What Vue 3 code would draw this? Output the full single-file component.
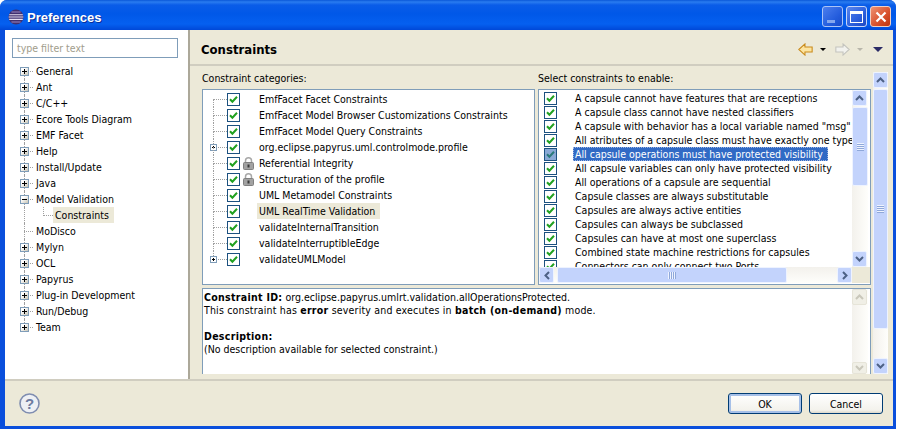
<script setup>
const preferencePages = [
  { label: 'General', twistie: 'plus' },
  { label: 'Ant', twistie: 'plus' },
  { label: 'C/C++', twistie: 'plus' },
  { label: 'Ecore Tools Diagram', twistie: 'plus' },
  { label: 'EMF Facet', twistie: 'plus' },
  { label: 'Help', twistie: 'plus' },
  { label: 'Install/Update', twistie: 'plus' },
  { label: 'Java', twistie: 'plus' },
  { label: 'Model Validation', twistie: 'minus' },
  { label: 'Constraints', child: true },
  { label: 'MoDisco' },
  { label: 'Mylyn', twistie: 'plus' },
  { label: 'OCL', twistie: 'plus' },
  { label: 'Papyrus', twistie: 'plus' },
  { label: 'Plug-in Development', twistie: 'plus' },
  { label: 'Run/Debug', twistie: 'plus' },
  { label: 'Team', twistie: 'plus', last: true }
]

const categories = [
  { label: 'EmfFacet Facet Constraints' },
  { label: 'EmfFacet Model Browser Customizations Constraints' },
  { label: 'EmfFacet Model Query Constraints' },
  { label: 'org.eclipse.papyrus.uml.controlmode.profile', expandable: true },
  { label: 'Referential Integrity', locked: true },
  { label: 'Structuration of the profile', locked: true },
  { label: 'UML Metamodel Constraints' },
  { label: 'UML RealTime Validation', selected: true },
  { label: 'validateInternalTransition' },
  { label: 'validateInterruptibleEdge' },
  { label: 'validateUMLModel', expandable: true, last: true }
]

const constraints = [
  'A capsule cannot have features that are receptions',
  'A capsule class cannot have nested classifiers',
  'A capsule with behavior has a local variable named "msg"',
  'All atributes of a capsule class must have exactly one type',
  'All capsule operations must have protected visibility',
  'All capsule variables can only have protected visibility',
  'All operations of a capsule are sequential',
  'Capsule classes are always substitutable',
  'Capsules are always active entities',
  'Capsules can always be subclassed',
  'Capsules can have at most one superclass',
  'Combined state machine restrictions for capsules',
  'Connectors can only connect two Ports'
]
const selectedConstraintIndex = 4
</script>

<template>
  <div class="window">
    <header class="title-bar">
      <svg class="app-icon" viewBox="0 0 16 16" width="16" height="16">
        <circle cx="8" cy="8" r="7.5" fill="#40306f" />
        <path d="M1.2 5.2h13.6v1.1H1.2zM.7 7.5h14.6v1.1H.7zM1.2 9.8h13.6v1.1H1.2z" fill="#e6dff2" />
        <path d="M3.4 2.6h9.2v.9H3.4zM3.4 12.5h9.2v.9H3.4z" fill="#9a86c4" />
      </svg>
      <span class="title-text">Preferences</span>
      <div class="window-controls">
        <button class="window-button" type="button">
          <span class="minimize-glyph"></span>
        </button>
        <button class="window-button" type="button">
          <span class="maximize-glyph"></span>
        </button>
        <button class="window-button window-button--close" type="button">
          <svg viewBox="0 0 12 12" width="12" height="12">
            <path d="M1.5 1.5l9 9M10.5 1.5l-9 9" stroke="#fff" stroke-width="2.2" fill="none" />
          </svg>
        </button>
      </div>
    </header>

    <div class="window-body">
      <div class="main-area">
        <aside class="sidebar">
          <div class="filter-input">type filter text</div>
          <ul class="page-tree">
            <li
              v-for="page in preferencePages"
              :key="page.label"
              :class="['page-row', { 'page-row--child': page.child, 'page-row--last': page.last }]"
            >
              <span v-if="page.child" class="child-guide"></span>
              <span v-else class="page-guide"></span>
              <span v-if="page.twistie" class="twistie">
                <span class="twistie-h"></span>
                <span v-if="page.twistie === 'plus'" class="twistie-v"></span>
              </span>
              <span :class="['page-label', { 'page-label--selected': page.child }]">{{ page.label }}</span>
            </li>
          </ul>
        </aside>

        <section class="page">
          <div class="page-header">
            <h1 class="page-title">Constraints</h1>
            <div class="nav-tools">
              <svg viewBox="0 0 14 12" width="15" height="13">
                <path d="M.8 6L6.5.8v2.9h6.7v4.6H6.5v2.9z" fill="#fce4a0" stroke="#c98a1a" stroke-width="1" />
              </svg>
              <span class="drop-arrow"></span>
              <svg class="nav-forward" viewBox="0 0 14 12" width="15" height="13">
                <path d="M13.2 6L7.5.8v2.9H.8v4.6h6.7v2.9z" fill="#f2f2ee" stroke="#c4c4be" stroke-width="1" />
              </svg>
              <span class="drop-arrow drop-arrow--disabled"></span>
              <span class="view-menu-arrow"></span>
            </div>
          </div>

          <div class="page-content">
            <div class="panes">
              <div class="upper-panes">
                <div class="pane">
                  <div class="pane-label">Constraint categories:</div>
                  <ul class="category-tree">
                    <li
                      v-for="category in categories"
                      :key="category.label"
                      :class="['category-row', { 'category-row--last': category.last }]"
                    >
                      <span class="category-guide"></span>
                      <span v-if="category.expandable" class="small-twistie"></span>
                      <svg class="check-box" viewBox="0 0 13 13" width="13" height="13">
                        <rect x=".5" y=".5" width="12" height="12" fill="#fff" stroke="#1c5180" />
                        <path d="M3 6.2l2.4 2.5L10 3.8" fill="none" stroke="#21a121" stroke-width="2" />
                      </svg>
                      <svg v-if="category.locked" class="lock-icon" viewBox="0 0 11 13" width="11" height="13">
                        <path d="M2.5 6V3.8a3 3 0 0 1 6 0V6" fill="none" stroke="#a8a8a8" stroke-width="1.5" />
                        <rect x=".5" y="5.5" width="10" height="7" rx="1" fill="#a2a2a2" stroke="#808080" />
                        <rect x="4.5" y="7.5" width="2" height="3" fill="#3a3a3a" />
                      </svg>
                      <span :class="['category-label', { 'category-label--selected': category.selected }]">{{ category.label }}</span>
                    </li>
                  </ul>
                </div>

                <div class="pane">
                  <div class="pane-label">Select constraints to enable:</div>
                  <div class="constraint-box">
                    <div class="constraint-main">
                      <ul class="constraint-list">
                        <li v-for="(constraint, index) in constraints" :key="constraint" class="constraint-row">
                          <svg class="check-box" viewBox="0 0 13 13" width="13" height="13">
                            <rect
                              x=".5"
                              y=".5"
                              width="12"
                              height="12"
                              :fill="index === selectedConstraintIndex ? '#8aa9d6' : '#fff'"
                              stroke="#1c5180"
                            />
                            <path
                              d="M3 6.2l2.4 2.5L10 3.8"
                              fill="none"
                              :stroke="index === selectedConstraintIndex ? '#2a7a7a' : '#21a121'"
                              stroke-width="2"
                            />
                          </svg>
                          <span :class="['constraint-label', { 'constraint-label--selected': index === selectedConstraintIndex }]">{{ constraint }}</span>
                        </li>
                      </ul>
                      <div class="scrollbar scrollbar--vertical">
                        <span class="scroll-button"><svg viewBox="0 0 9 6" width="9" height="6"><path d="M1 5l3.5-3.5L8 5" fill="none" stroke="#4d6185" stroke-width="2" /></svg></span>
                        <span class="scroll-thumb scroll-thumb--list"><span class="grip"></span></span>
                        <span class="scroll-track"></span>
                        <span class="scroll-button"><svg viewBox="0 0 9 6" width="9" height="6"><path d="M1 1l3.5 3.5L8 1" fill="none" stroke="#4d6185" stroke-width="2" /></svg></span>
                      </div>
                    </div>
                    <div class="scrollbar scrollbar--horizontal">
                      <span class="scroll-button"><svg viewBox="0 0 6 9" width="6" height="9"><path d="M5 1L1.5 4.5 5 8" fill="none" stroke="#4d6185" stroke-width="2" /></svg></span>
                      <span class="scroll-thumb scroll-thumb--wide"><span class="grip grip--vertical"></span></span>
                      <span class="scroll-track"></span>
                      <span class="scroll-button"><svg viewBox="0 0 6 9" width="6" height="9"><path d="M1 1l3.5 3.5L1 8" fill="none" stroke="#4d6185" stroke-width="2" /></svg></span>
                      <span class="scroll-corner"></span>
                    </div>
                  </div>
                </div>
              </div>

              <div class="description-box">
                <div class="description-text">
                  <p><b>Constraint ID:</b> org.eclipse.papyrus.umlrt.validation.allOperationsProtected.</p>
                  <p class="severity-line">This constraint has <b>error</b> severity and executes in <b>batch (on-demand)</b> mode.</p>
                  <p class="blank-line"></p>
                  <p><b>Description:</b></p>
                  <p>(No description available for selected constraint.)</p>
                </div>
                <div class="scrollbar scrollbar--vertical scrollbar--disabled">
                  <span class="scroll-button"><svg viewBox="0 0 9 6" width="9" height="6"><path d="M1 5l3.5-3.5L8 5" fill="none" stroke="#c9c7ba" stroke-width="2" /></svg></span>
                  <span class="scroll-track"></span>
                  <span class="scroll-button scroll-button--clipped"><svg viewBox="0 0 9 6" width="9" height="6"><path d="M1 1l3.5 3.5L8 1" fill="none" stroke="#c9c7ba" stroke-width="2" /></svg></span>
                </div>
              </div>
            </div>

            <div class="scrollbar scrollbar--vertical scrollbar--outer">
              <span class="scroll-button"><svg viewBox="0 0 9 6" width="9" height="6"><path d="M1 5l3.5-3.5L8 5" fill="none" stroke="#4d6185" stroke-width="2" /></svg></span>
              <span class="scroll-thumb scroll-thumb--outer"><span class="grip"></span></span>
              <span class="scroll-track"></span>
              <span class="scroll-button"><svg viewBox="0 0 9 6" width="9" height="6"><path d="M1 1l3.5 3.5L8 1" fill="none" stroke="#4d6185" stroke-width="2" /></svg></span>
            </div>
          </div>
        </section>
      </div>

      <footer class="footer">
        <svg class="help-icon" viewBox="0 0 21 21" width="21" height="21">
          <circle cx="10.5" cy="10.5" r="9.5" fill="#eef0f4" stroke="#7f8db0" stroke-width="1.6" />
          <text x="10.5" y="15.5" text-anchor="middle" class="help-mark">?</text>
        </svg>
        <div class="footer-buttons">
          <button class="dialog-button dialog-button--default" type="button">OK</button>
          <button class="dialog-button" type="button">Cancel</button>
        </div>
      </footer>
    </div>
  </div>
</template>

<style scoped>
.window {
  width: 896px;
  height: 429px;
  box-sizing: border-box;
  display: flex;
  flex-direction: column;
  overflow: hidden;
  font-family: "DejaVu Sans Condensed", "DejaVu Sans", sans-serif;
  font-stretch: condensed;
  font-size: 10.5px;
  color: #000;
  background: #0a4fdc;
  border-radius: 7px 7px 0 0;
}
.title-bar {
  height: 30px;
  flex: none;
  display: flex;
  align-items: center;
  padding: 4px 5px 0 8px;
  box-sizing: border-box;
  background: linear-gradient(#0a57d8 0, #2a7cf0 2px, #0a5ce8 5px, #0058e8 14px, #0560f0 24px, #0048d8 30px);
}
.app-icon {
  flex: none;
}
.title-text {
  margin: 1px 0 0 3px;
  font-family: "Liberation Sans", sans-serif;
  font-stretch: normal;
  font-weight: 700;
  font-size: 13px;
  color: #fff;
  text-shadow: 1px 1px 0 #0a2f9c;
}
.window-controls {
  margin: -1px 0 0 auto;
  display: flex;
  gap: 3px;
}
.window-button {
  width: 21px;
  height: 21px;
  padding: 0;
  display: flex;
  align-items: center;
  justify-content: center;
  box-sizing: border-box;
  border: 1px solid #c8d6f8;
  border-radius: 3px;
  background: linear-gradient(135deg, #5a86ee, #2c5fdc 60%, #1c48c4);
}
.window-button:first-child {
  opacity: 0.85;
}
.window-button--close {
  background: linear-gradient(135deg, #ee9272, #d8502c 60%, #bc3410);
  border-color: #f0d0c4;
}
.minimize-glyph {
  width: 8px;
  height: 3px;
  margin-top: 9px;
  margin-right: 3px;
  background: #9db4ee;
}
.maximize-glyph {
  width: 13px;
  height: 12px;
  box-sizing: border-box;
  border: 1px solid #fff;
  border-top-width: 3px;
}
.window-body {
  flex: 1;
  min-height: 0;
  margin: 0 3px 3px 5px;
  display: flex;
  flex-direction: column;
  background: #ece9d8;
}
.main-area {
  height: 349px;
  flex: none;
  display: flex;
}
.sidebar {
  width: 183px;
  flex: none;
  box-sizing: border-box;
  padding: 8px 0 0 7px;
  background: #fff;
}
.filter-input {
  width: 166px;
  height: 20px;
  box-sizing: border-box;
  padding: 3px 0 0 4px;
  border: 1px solid #7f9db9;
  color: #a19d8c;
}
.page-tree {
  list-style: none;
  margin: 5px 0 0;
  padding: 0;
}
.page-row {
  position: relative;
  height: 16px;
  line-height: 16px;
  padding-left: 22px;
}
.page-row--child {
  padding-left: 41px;
}
.page-guide {
  position: absolute;
  left: 12px;
  top: 0;
  width: 9px;
  height: 8px;
  border-bottom: 1px dotted #a0a0a0;
}
.page-row::before {
  content: '';
  position: absolute;
  left: 12px;
  top: 0;
  bottom: 0;
  border-left: 1px dotted #a0a0a0;
}
.page-row:first-child::before {
  top: 8px;
}
.page-row--last::before {
  bottom: 8px;
}
.child-guide {
  position: absolute;
  left: 31px;
  top: 0;
  width: 9px;
  height: 8px;
  border-left: 1px dotted #a0a0a0;
  border-bottom: 1px dotted #a0a0a0;
}
.twistie {
  position: absolute;
  left: 8px;
  top: 4px;
  width: 9px;
  height: 9px;
  box-sizing: border-box;
  border: 1px solid #7f9db9;
  background: linear-gradient(135deg, #fff 30%, #c8c4b4);
}
.twistie-h {
  position: absolute;
  left: 1px;
  top: 3px;
  width: 5px;
  height: 1px;
  background: #000;
}
.twistie-v {
  position: absolute;
  left: 3px;
  top: 1px;
  width: 1px;
  height: 5px;
  background: #000;
}
.page-label {
  display: inline-block;
  padding: 0 2px;
}
.page-label--selected {
  background: #ece9d8;
  padding-right: 5px;
}
.page {
  flex: 1;
  min-width: 0;
  display: flex;
  flex-direction: column;
  border-left: 2px solid #aca899;
}
.page-header {
  height: 36px;
  flex: none;
  box-sizing: border-box;
  display: flex;
  align-items: center;
  padding: 5px 10px 0 11px;
  border-bottom: 2px solid #d0cdc0;
}
.page-title {
  margin: 0;
  font-size: 13px;
  font-weight: 700;
}
.nav-tools {
  margin-left: auto;
  display: flex;
  align-items: center;
}
.drop-arrow {
  width: 0;
  height: 0;
  margin: 0 9px 0 7px;
  border-left: 3px solid transparent;
  border-right: 3px solid transparent;
  border-top: 3px solid #000;
}
.drop-arrow--disabled {
  border-top-color: #b8b6aa;
}
.view-menu-arrow {
  width: 0;
  height: 0;
  margin-left: 1px;
  border-left: 5px solid transparent;
  border-right: 5px solid transparent;
  border-top: 5px solid #2b2b66;
}
.page-content {
  flex: 1;
  min-height: 0;
  display: flex;
  padding: 6px 0 5px 12px;
  gap: 2px;
}
.panes {
  width: 669px;
  flex: none;
  display: flex;
  flex-direction: column;
}
.upper-panes {
  height: 213px;
  flex: none;
  display: flex;
  gap: 3px;
}
.pane {
  width: 333px;
  flex: none;
  display: flex;
  flex-direction: column;
}
.pane-label {
  height: 17px;
  line-height: 12px;
  flex: none;
}
.category-tree {
  flex: 1;
  list-style: none;
  margin: 0;
  padding: 1px 0 0;
  box-sizing: border-box;
  background: #fff;
  border: 1px solid #7f9db9;
}
.category-row {
  position: relative;
  height: 16px;
  line-height: 16px;
  display: flex;
  align-items: center;
  padding-left: 24px;
  white-space: nowrap;
}
.category-guide {
  position: absolute;
  left: 10px;
  top: 0;
  width: 13px;
  height: 8px;
  border-left: 1px dotted #a0a0a0;
  border-bottom: 1px dotted #a0a0a0;
}
.category-row:first-child .category-guide {
  border-left-color: transparent;
}
.category-row::after {
  content: '';
  position: absolute;
  left: 10px;
  top: 8px;
  bottom: 0;
  border-left: 1px dotted #a0a0a0;
}
.category-row--last::after {
  display: none;
}
.small-twistie {
  position: absolute;
  left: 7px;
  top: 5px;
  width: 7px;
  height: 7px;
  box-sizing: border-box;
  background:
    linear-gradient(#000, #000) center / 3px 1px no-repeat,
    linear-gradient(#000, #000) center / 1px 3px no-repeat,
    #fff;
  border: 1px solid #7f9db9;
}
.check-box {
  flex: none;
}
.lock-icon {
  position: absolute;
  left: 40px;
  top: 2px;
}
.category-label {
  margin-left: 17px;
  padding: 0 2px;
}
.category-label--selected {
  background: #ece9d8;
  padding-right: 5px;
}
.constraint-box {
  flex: 1;
  min-height: 0;
  display: flex;
  flex-direction: column;
  box-sizing: border-box;
  background: #fff;
  border: 1px solid #7f9db9;
}
.constraint-main {
  flex: 1;
  min-height: 0;
  display: flex;
}
.constraint-list {
  flex: 1;
  min-width: 0;
  list-style: none;
  margin: 0;
  padding: 1px 0 0 5px;
  overflow: hidden;
}
.constraint-row {
  height: 14px;
  line-height: 14px;
  display: flex;
  align-items: center;
}
.constraint-label {
  margin-left: 16px;
  padding: 0 5px 0 2px;
  white-space: nowrap;
}
.constraint-label--selected {
  background: #316ac5;
  color: #fff;
  outline: 1px dotted #9db4e0;
  outline-offset: -1px;
}
.scrollbar {
  display: flex;
  flex: none;
  background: linear-gradient(90deg, #f3f1ec, #fefefb);
}
.scrollbar--vertical {
  width: 16px;
  flex-direction: column;
  margin-right: 2px;
}
.scrollbar--horizontal {
  height: 16px;
  margin-bottom: 1px;
  background: linear-gradient(#f3f1ec, #fefefb);
}
.scrollbar--outer {
  height: 302px;
  margin-right: 0;
  width: 15px;
}
.scroll-button {
  width: 15px;
  height: 16px;
  flex: none;
  display: flex;
  align-items: center;
  justify-content: center;
  box-sizing: border-box;
  border: 1px solid #eef3ff;
  border-radius: 2px;
  background: #c3d3fc;
}
.scrollbar--disabled .scroll-button {
  background: #f0efe6;
  border-color: #e6e4d8;
}
.scroll-button--clipped {
  height: 12px;
}
.scroll-track {
  flex: 1;
}
.scroll-thumb {
  flex: none;
  box-sizing: border-box;
  display: flex;
  align-items: center;
  justify-content: center;
  border: 1px solid #eef3ff;
  border-radius: 2px;
  background: #c3d3fc;
}
.scroll-thumb--list {
  height: 79px;
  margin-top: 1px;
}
.scroll-thumb--outer {
  height: 240px;
  margin-top: 1px;
}
.scroll-thumb--wide {
  width: 230px;
  margin-left: 3px;
}
.grip {
  width: 7px;
  height: 8px;
  background: repeating-linear-gradient(#eef3ff 0 1px, #8fa8da 1px 2px);
}
.grip--vertical {
  width: 8px;
  height: 7px;
  background: repeating-linear-gradient(90deg, #eef3ff 0 1px, #8fa8da 1px 2px);
}
.scroll-corner {
  width: 18px;
  flex: none;
  background: #ece9d8;
}
.description-box {
  flex: 1;
  min-height: 0;
  margin-top: 3px;
  overflow: hidden;
  display: flex;
  justify-content: space-between;
  background: #fff;
  border: 1px solid #7f9db9;
  border-bottom: none;
}
.description-text {
  padding: 2px 0 0 1px;
  line-height: 13px;
}
.description-text p {
  margin: 0;
  height: 13px;
  white-space: nowrap;
}
.description-text b {
  letter-spacing: 0.3px;
}
.severity-line {
  letter-spacing: 0.18px;
}
.footer {
  flex: 1;
  min-height: 0;
  display: flex;
  align-items: center;
  justify-content: space-between;
  padding: 0 10px 0 14px;
  border-top: 2px solid #d0cdc0;
}
.help-mark {
  font-family: "Liberation Sans", sans-serif;
  font-size: 15px;
  font-weight: 700;
  fill: #6d7ba0;
}
.footer-buttons {
  display: flex;
  gap: 7px;
}
.dialog-button {
  width: 74px;
  height: 21px;
  padding: 0;
  font: inherit;
  color: #000;
  box-sizing: border-box;
  border: 1px solid #003c74;
  border-radius: 3px;
  background: linear-gradient(#fff, #f3f2ec 85%, #dcd8ca);
}
.dialog-button--default {
  box-shadow: inset 0 0 0 2px #a6c0e8;
}
</style>
